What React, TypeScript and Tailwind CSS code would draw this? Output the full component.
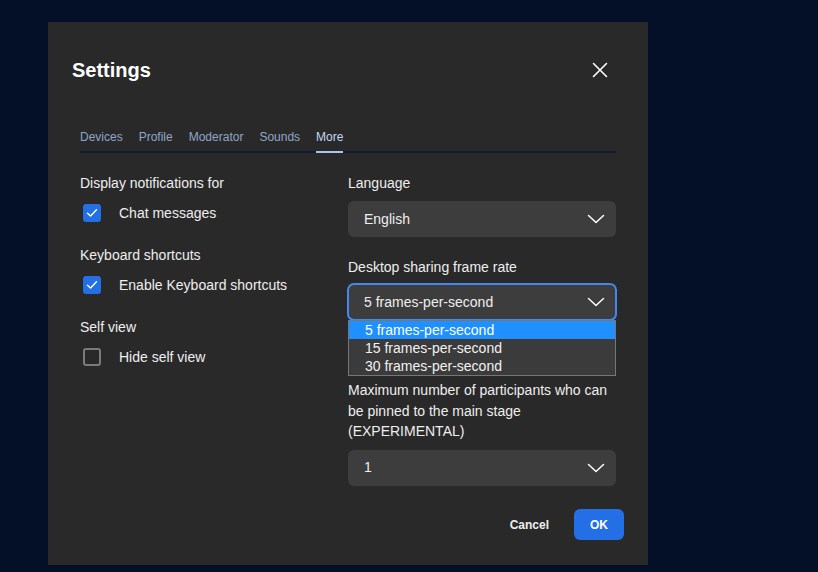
import { useState } from 'react';

const TABS = ['Devices', 'Profile', 'Moderator', 'Sounds', 'More'];
const FRAME_RATES = ['5 frames-per-second', '15 frames-per-second', '30 frames-per-second'];

function Chevron() {
  return (
    <svg width="18" height="10" viewBox="0 0 18 10" fill="none" className="shrink-0">
      <path d="M1.5 1.5 L9 8.5 L16.5 1.5" stroke="#ffffff" strokeWidth="1.5" strokeLinecap="round" strokeLinejoin="round" />
    </svg>
  );
}

function Checkbox({ checked, label }: { checked: boolean; label: string }) {
  return (
    <div className="mt-[10px] flex h-5 items-center">
      <div
        className={`ml-[3px] flex h-[18px] w-[18px] items-center justify-center rounded-[3px] ${
          checked ? 'bg-[#246fe5]' : 'border-2 border-[#7a7a7a]'
        }`}
      >
        {checked && (
          <svg width="12" height="10" viewBox="0 0 12 10" fill="none">
            <path d="M1.5 5.2 L4.6 8 L10.5 1.8" stroke="#ffffff" strokeWidth="1.4" strokeLinecap="round" strokeLinejoin="round" />
          </svg>
        )}
      </div>
      <span className="ml-[18px] text-[14px] leading-5 text-[#eeeeee]">{label}</span>
    </div>
  );
}

function SelectBox({ value, focused }: { value: string; focused?: boolean }) {
  return (
    <div
      className={`flex h-9 items-center justify-between rounded-md bg-[#3d3d3d] pl-4 pr-[11px] ${
        focused ? 'outline-2 outline-[#4687ed] -outline-offset-1' : ''
      }`}
    >
      <span className="text-[14px] text-[#eeeeee]">{value}</span>
      <Chevron />
    </div>
  );
}

export default function App() {
  const [tab] = useState('More');

  return (
    <div
      className="min-h-[572px] w-full bg-[#041027] pl-12 pt-[22px]"
      style={{ fontFamily: '"Liberation Sans", Arial, sans-serif' }}
    >
      <div className="flex h-[543px] w-[600px] flex-col bg-[#292929] px-6">
        {/* header */}
        <div className="mt-[34px] flex h-7 items-center justify-between">
          <h1 className="text-[20px] font-bold leading-7 text-white">Settings</h1>
          <button className="mr-3 flex h-6 w-6 items-center justify-center">
            <svg width="16" height="16" viewBox="0 0 16 16" fill="none">
              <path d="M1.5 1.5 L14.5 14.5 M14.5 1.5 L1.5 14.5" stroke="#ffffff" strokeWidth="1.6" strokeLinecap="round" />
            </svg>
          </button>
        </div>

        {/* tabs */}
        <div className="mx-2 mt-[45px] flex gap-4 border-b-2 border-[#0e1a2f]">
          {TABS.map((t) => (
            <div
              key={t}
              className={`relative pb-[6px] text-[12px] leading-4 ${
                t === tab ? 'text-[#c5d7f3]' : 'text-[#8ea6c9]'
              }`}
            >
              {t}
              {t === tab && <div className="absolute -bottom-[2px] left-0 right-0 h-[2px] bg-[#a7c4f2]" />}
            </div>
          ))}
        </div>

        {/* body */}
        <div className="mx-2 mt-5 flex gap-8">
          <div className="flex w-[236px] flex-col gap-[22px]">
            <div>
              <div className="text-[14px] leading-5 text-[#eeeeee]">Display notifications for</div>
              <Checkbox checked label="Chat messages" />
            </div>
            <div>
              <div className="text-[14px] leading-5 text-[#eeeeee]">Keyboard shortcuts</div>
              <Checkbox checked label="Enable Keyboard shortcuts" />
            </div>
            <div>
              <div className="text-[14px] leading-5 text-[#eeeeee]">Self view</div>
              <Checkbox checked={false} label="Hide self view" />
            </div>
          </div>

          <div className="flex w-[268px] flex-col">
            <div className="text-[14px] leading-5 text-[#eeeeee]">Language</div>
            <div className="mt-2">
              <SelectBox value="English" />
            </div>

            <div className="mt-5 text-[14px] leading-5 text-[#eeeeee]">Desktop sharing frame rate</div>
            <div className="relative mt-[7px]">
              <SelectBox value="5 frames-per-second" focused />
              {/* open native list */}
              <div className="absolute left-0 right-0 top-[36px] z-10 border border-[#767676] bg-[#3b3b3b]">
                {FRAME_RATES.map((r, i) => (
                  <div
                    key={r}
                    className={`h-[18px] pl-4 text-[14px] leading-[18px] text-[#f2f2f2] ${
                      i === 0 ? 'bg-[#1e90ff] text-white' : ''
                    }`}
                  >
                    {r}
                  </div>
                ))}
              </div>
            </div>

            <div className="mt-[60px] text-[14px] leading-[20.5px] text-[#eeeeee]">
              Maximum number of participants who can be pinned to the main stage (EXPERIMENTAL)
            </div>
            <div className="mt-2">
              <SelectBox value="1" />
            </div>
          </div>
        </div>

        {/* footer */}
        <div className="mt-auto mb-[25px] flex items-center justify-end gap-[9px]">
          <button className="h-[31px] px-4 text-[12px] font-bold text-[#eeeeee]">Cancel</button>
          <button className="h-[31px] rounded-md bg-[#246fe5] px-4 text-[12px] font-bold text-white">OK</button>
        </div>
      </div>
    </div>
  );
}
